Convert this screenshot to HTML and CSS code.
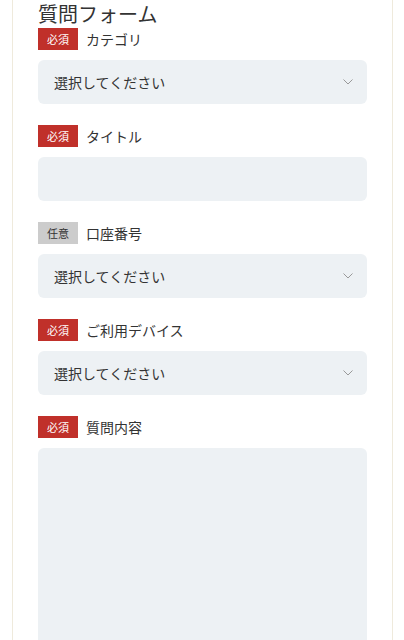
FILE: index.html
```html
<!DOCTYPE html>
<html lang="ja">
<head>
    <meta charset="UTF-8">
    <title>質問フォーム</title>
    <link rel="stylesheet" href="styles.css">
</head>
<body>
<div class="card">
    <h1 class="title">質問フォーム</h1>

    <div class="group">
        <div class="label"><span class="badge req">必須</span>カテゴリ</div>
        <div class="field select">選択してください<svg class="arrow" viewBox="0 0 10 6"><path d="M0.5 0.5 L5 5 L9.5 0.5"/></svg></div>
    </div>

    <div class="group">
        <div class="label"><span class="badge req">必須</span>タイトル</div>
        <div class="field"></div>
    </div>

    <div class="group">
        <div class="label"><span class="badge opt">任意</span>口座番号</div>
        <div class="field select">選択してください<svg class="arrow" viewBox="0 0 10 6"><path d="M0.5 0.5 L5 5 L9.5 0.5"/></svg></div>
    </div>

    <div class="group">
        <div class="label"><span class="badge req">必須</span>ご利用デバイス</div>
        <div class="field select">選択してください<svg class="arrow" viewBox="0 0 10 6"><path d="M0.5 0.5 L5 5 L9.5 0.5"/></svg></div>
    </div>

    <div class="group">
        <div class="label"><span class="badge req">必須</span>質問内容</div>
        <div class="field area"></div>
    </div>
</div>
</body>
</html>
```

FILE: styles.css
```css
*{
    margin:0;
    padding:0;
    box-sizing:border-box;
}
body{
    font-family: "Noto Sans CJK JP", "Noto Sans", sans-serif;
    color:#333;
    background:#fff;
}
.card{
    margin-left:12px;
    width:381px;
    height:640px;
    overflow:hidden;
    border-left:1px solid #efeadc;
    border-right:1px solid #efeadc;
    padding:0 25px;
}
.title{
    font-size:20px;
    font-weight:normal;
    line-height:28px;
    height:28px;
    color:#333;
}
.group{
    margin-bottom:21px;
}
.label{
    display:flex;
    align-items:center;
    height:22px;
    font-size:14px;
    margin-bottom:10px;
}
.badge{
    width:40px;
    height:22px;
    line-height:22px;
    text-align:center;
    font-size:11px;
    margin-right:8px;
}
.req{
    background:#c0302a;
    color:#fff;
}
.opt{
    background:#cccccc;
    color:#333;
}
.field{
    height:44px;
    background:#edf1f4;
    border-radius:6px;
}
.select{
    display:flex;
    align-items:center;
    justify-content:space-between;
    padding:0 14px 0 16px;
    font-size:14px;
}
.arrow{
    width:10px;
    height:6px;
    fill:none;
    stroke:#999;
    stroke-width:1;
}
.area{
    height:300px;
}
```
